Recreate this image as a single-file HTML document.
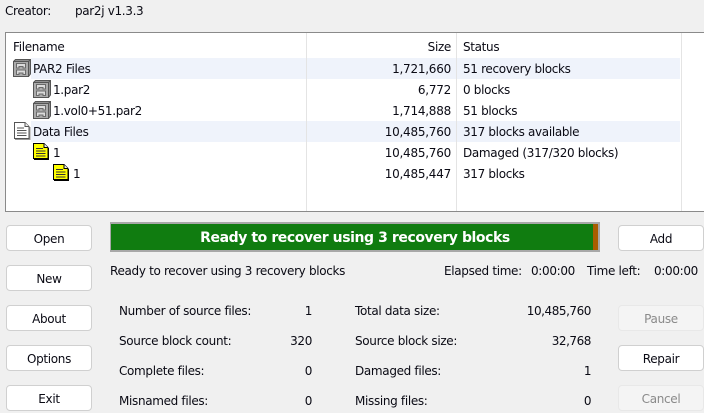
<!DOCTYPE html>
<html>
<head>
<meta charset="utf-8">
<style>
html,body{margin:0;padding:0;width:704px;height:413px;overflow:hidden;background:#f0f0f0}
body{position:relative;font-family:"DejaVu Sans","Liberation Sans",sans-serif;font-size:12px;color:#0a0a14;letter-spacing:-.33px}
.t{position:absolute;white-space:nowrap;line-height:16px;height:16px}
.box{position:absolute;left:5px;top:32px;width:699px;height:178px;background:#fff;border:1px solid #8a8a8a;border-right:0;box-sizing:content-box}
.band{position:absolute;left:31px;width:649px;height:21px;background:#eff3fb}
.sep{position:absolute;top:33px;height:178px;width:1px;background:#e4e4e4}
.btn{position:absolute;width:86px;height:26px;box-sizing:border-box;background:#fff;border:1px solid #d0d0d0;border-radius:4px;text-align:center;line-height:26px}
.dis{background:#f4f4f4;border-color:#e8e8e8;color:#8a8a8a}
svg{position:absolute}
.bar{position:absolute;left:110px;top:222px;width:490px;height:30px;box-sizing:border-box;border:1px solid #a8a8a8;background:#107c10;border-width:2px 2px 2px 1px}
.or{position:absolute;right:0;top:0;width:5px;height:26px;background:#a85d00}
.bt{position:absolute;left:110px;top:222px;width:490px;height:30px;line-height:32px;text-align:center;color:#fff;font-family:"DejaVu Sans","Liberation Sans",sans-serif;font-weight:bold;font-size:14px;letter-spacing:-.42px}
.n{letter-spacing:-.45px}
.m{letter-spacing:-.24px}
</style>
</head>
<body>
<svg width="0" height="0" style="position:absolute">
<defs>
<symbol id="cab" viewBox="0 0 20 20">
<path d="M1.500 3.500L3.500 1.500H18.500V16L16.500 18.500H1.500Z" fill="#909090" stroke="#555"/>
<rect x="1.500" y="3.500" width="15" height="15" fill="#ababab" stroke="#555"/>
<path d="M16.500 3.500L18.500 1.500" stroke="#555"/>
<path d="M4.500 5.500H13.500V10H11V8.500H7V10H4.500Z" fill="#dcdcdc" stroke="#6a6a6a"/>
<path d="M4.500 12H13.500V16.500H11V15H7V16.500H4.500Z" fill="#dcdcdc" stroke="#6a6a6a"/>
</symbol>
<symbol id="doc" viewBox="0 0 18 18">
<path d="M1.500 .5H12L16 4.500V16.500H1.500Z" fill="#fff" stroke="#555"/>
<path d="M2 17.500H17V5" fill="none" stroke="#999"/>
<path d="M12 .5V4.500H16" fill="#eee" stroke="#555"/>
<path d="M4 6H11M4 8.500H13.500M4 11H13.500M4 13.500H13.500" stroke="#555"/>
</symbol>
<symbol id="yel" viewBox="0 0 16 17">
<path d="M.5 .5H11L15 4.500V15.500H.5Z" fill="#ffff00" stroke="#000"/>
<path d="M1 16.500H15.500V5" fill="none" stroke="#000"/>
<path d="M11 .5V4.500H15" fill="#eee" stroke="#000"/>
<path d="M3 5.500H10M3 8H12.500M3 10.500H12.500M3 13H12.500" stroke="#333"/>
</symbol>
</defs>
</svg>

<div class="t" style="left:5px;top:3px">Creator:</div>
<div class="t" style="left:75px;top:3px">par2j v1.3.3</div>

<div class="box"></div>
<div class="band" style="top:58px"></div>
<div class="band" style="top:121px"></div>
<div class="sep" style="left:306px"></div>
<div class="sep" style="left:456px"></div>
<div class="sep" style="left:681px"></div>

<div class="t" style="left:13px;top:39px">Filename</div>
<div class="t" style="right:253px;top:39px">Size</div>
<div class="t" style="left:463px;top:39px">Status</div>

<svg style="left:12px;top:58px" width="20" height="20"><use href="#cab"/></svg>
<svg style="left:32px;top:79px" width="20" height="20"><use href="#cab"/></svg>
<svg style="left:32px;top:100px" width="20" height="20"><use href="#cab"/></svg>
<svg style="left:13px;top:122px" width="18" height="18"><use href="#doc"/></svg>
<svg style="left:33px;top:143px" width="16" height="17"><use href="#yel"/></svg>
<svg style="left:53px;top:164px" width="16" height="17"><use href="#yel"/></svg>

<div class="t" style="left:33px;top:61px">PAR2 Files</div>
<div class="t" style="left:53px;top:82px">1.par2</div>
<div class="t" style="left:53px;top:103px">1.vol0+51.par2</div>
<div class="t" style="left:33px;top:124px">Data Files</div>
<div class="t" style="left:53px;top:145px">1</div>
<div class="t" style="left:73px;top:166px">1</div>

<div class="t m" style="right:253px;top:61px">1,721,660</div>
<div class="t m" style="right:253px;top:82px">6,772</div>
<div class="t m" style="right:253px;top:103px">1,714,888</div>
<div class="t m" style="right:253px;top:124px">10,485,760</div>
<div class="t m" style="right:253px;top:145px">10,485,760</div>
<div class="t m" style="right:253px;top:166px">10,485,447</div>

<div class="t" style="left:463px;top:61px">51 recovery blocks</div>
<div class="t" style="left:463px;top:82px">0 blocks</div>
<div class="t" style="left:463px;top:103px">51 blocks</div>
<div class="t" style="left:463px;top:124px">317 blocks available</div>
<div class="t" style="left:463px;top:145px">Damaged (317/320 blocks)</div>
<div class="t" style="left:463px;top:166px">317 blocks</div>

<div class="btn" style="left:6px;top:225px">Open</div>
<div class="btn" style="left:6px;top:265px">New</div>
<div class="btn" style="left:6px;top:305px">About</div>
<div class="btn" style="left:6px;top:345px">Options</div>
<div class="btn" style="left:6px;top:385px">Exit</div>

<div class="btn" style="left:618px;top:225px">Add</div>
<div class="btn dis" style="left:618px;top:305px">Pause</div>
<div class="btn" style="left:618px;top:345px">Repair</div>
<div class="btn dis" style="left:618px;top:385px">Cancel</div>

<div class="bar"><div class="or"></div></div>
<div class="bt">Ready to recover using 3 recovery blocks</div>

<div class="t" style="left:110px;top:263px">Ready to recover using 3 recovery blocks</div>
<div class="t" style="left:444px;top:263px">Elapsed time:</div>
<div class="t" style="left:531px;top:263px">0:00:00</div>
<div class="t" style="left:587px;top:263px">Time left:</div>
<div class="t" style="left:654px;top:263px">0:00:00</div>

<div class="t" style="left:119px;top:303px">Number of source files:</div>
<div class="t" style="left:119px;top:333px">Source block count:</div>
<div class="t" style="left:119px;top:363px">Complete files:</div>
<div class="t" style="left:119px;top:393px">Misnamed files:</div>

<div class="t" style="right:392px;top:303px">1</div>
<div class="t" style="right:392px;top:333px">320</div>
<div class="t" style="right:392px;top:363px">0</div>
<div class="t" style="right:392px;top:393px">0</div>

<div class="t" style="left:355px;top:303px">Total data size:</div>
<div class="t" style="left:355px;top:333px">Source block size:</div>
<div class="t" style="left:355px;top:363px">Damaged files:</div>
<div class="t" style="left:355px;top:393px">Missing files:</div>

<div class="t n" style="right:113px;top:303px">10,485,760</div>
<div class="t n" style="right:113px;top:333px">32,768</div>
<div class="t n" style="right:113px;top:363px">1</div>
<div class="t n" style="right:113px;top:393px">0</div>
</body>
</html>
